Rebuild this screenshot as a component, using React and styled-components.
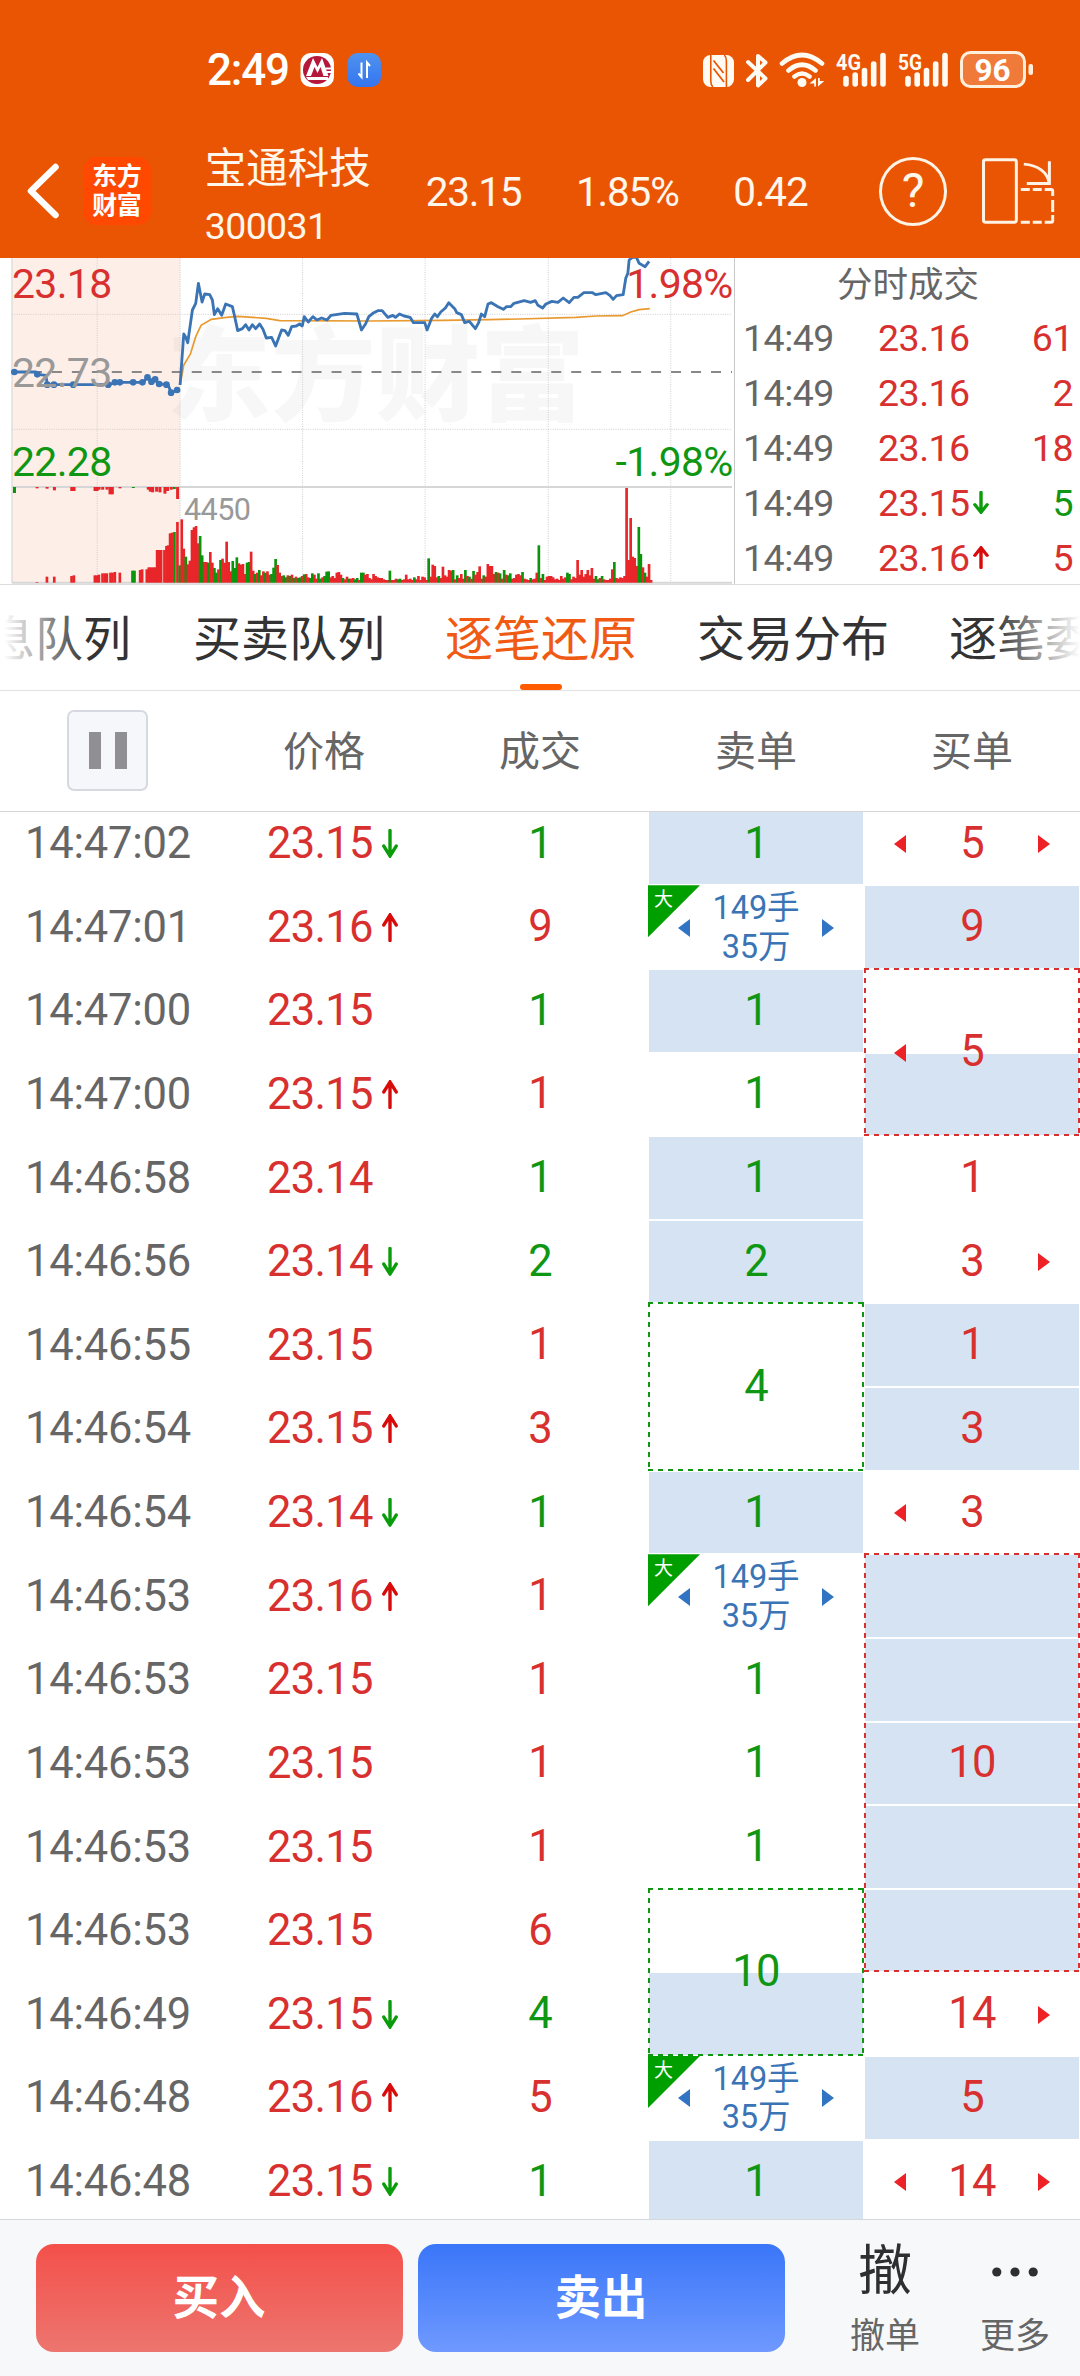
import React from "react";
import styled, { createGlobalStyle } from "styled-components";

const RED = "#d8302f";
const GREEN = "#0f9612";
const BLUE = "#3a74b5";

const GlobalStyle = createGlobalStyle`
  * {
    box-sizing: border-box;
  }
  body {
    margin: 0;
    background: #fff;
    font-family: Roboto, "Noto Sans CJK SC", sans-serif;
  }
`;

const Page = styled.div`
  width: 1080px;
  height: 2376px;
  display: flex;
  flex-direction: column;
  overflow: hidden;
  background: #fff;
`;

/* ---------- header ---------- */

const Header = styled.header`
  height: 258px;
  flex: none;
  background: #ea5504;
  color: #fff6ec;
`;

const StatusBar = styled.div`
  height: 124px;
  padding: 16px 46px 0 207px;
  display: flex;
  align-items: center;
`;

const Clock = styled.span`
  width: 93px;
  font-size: 44px;
  font-weight: 500;
  letter-spacing: -1.2px;
  line-height: 46px;
  color: #fff;
`;

const StatusIcons = styled.svg`
  display: block;
  margin-left: auto;
`;

const Badges = styled.svg`
  display: block;
`;

const TitleBar = styled.div`
  height: 134px;
  padding: 0 25px 0 27px;
  display: flex;
  align-items: center;
`;

const BackIcon = styled.svg`
  width: 33px;
  height: 56px;
  flex: none;
`;

const AppLogo = styled.div`
  width: 68px;
  height: 68px;
  margin-left: 23px;
  border-radius: 14px;
  background: #ff4800;
  color: #fff;
  display: flex;
  flex-direction: column;
  align-items: center;
  justify-content: center;
  font-size: 25px;
  font-weight: 700;
  line-height: 29px;
  letter-spacing: -0.5px;
`;

const StockName = styled.div`
  width: 222px;
  margin-left: 54px;
  padding-top: 10px;
  display: flex;
  flex-direction: column;
  font-size: 41.5px;
  line-height: 60px;
`;

const StockCode = styled.span`
  font-size: 37.5px;
  line-height: 55px;
  letter-spacing: -0.6px;
`;

const Quote = styled.span`
  width: ${(p) => p.$width}px;
  font-size: 40.5px;
  letter-spacing: -1.2px;
  line-height: 48px;
  padding-top: 2px;
  white-space: nowrap;
`;

const HelpButton = styled.div`
  width: 69px;
  height: 69px;
  margin-right: 34px;
  border: 3px solid #fff3e6;
  border-radius: 50%;
  display: flex;
  align-items: center;
  justify-content: center;
  font-size: 48px;
  line-height: 60px;
`;

/* ---------- chart + deals ---------- */

const Overview = styled.section`
  height: 327px;
  flex: none;
  display: flex;
  border-bottom: 1px solid #dcdcdc;
`;

const Chart = styled.svg`
  width: 735px;
  height: 326px;
  flex: none;
  display: block;
  border-right: 1px solid #c8c8c8;
`;

const Deals = styled.div`
  flex: 1;
  padding: 0 7px 0 8px;
`;

const DealsTitle = styled.div`
  padding-top: 2px;
  height: 53px;
  font-size: 35.5px;
  line-height: 50px;
  text-align: center;
  color: #666;
`;

const Deal = styled.div`
  height: 54.8px;
  display: flex;
  align-items: center;
  font-size: 37.5px;
  letter-spacing: -0.5px;
  color: ${RED};
`;

const DealTime = styled.span`
  width: 135px;
  color: #666;
`;

const DealPrice = styled.span`
  display: flex;
  align-items: center;
  gap: 3px;
`;

const DealVolume = styled.span`
  margin-left: auto;
  color: ${(p) => p.$color};
`;

/* ---------- tabs ---------- */

const Tabs = styled.nav`
  height: 106px;
  flex: none;
  padding-left: 1px;
  display: flex;
  gap: 60px;
  border-bottom: 1px solid #e2e2e2;
  overflow: hidden;
  position: relative;

  &::before,
  &::after {
    content: "";
    position: absolute;
    top: 0;
    bottom: 0;
    width: 86px;
  }
  &::before {
    left: 0;
    background: linear-gradient(to right, #fff 4px, rgba(255, 255, 255, 0));
  }
  &::after {
    right: 0;
    background: linear-gradient(to left, #fff, rgba(255, 255, 255, 0));
  }
`;

const Tab = styled.div`
  flex: none;
  width: ${(p) => (p.$cut ? "auto" : "192px")};
  margin-left: ${(p) => (p.$cut === "left" ? "-14px" : "0")};
  margin-right: ${(p) => (p.$cut === "left" ? "2px" : "0")};
  padding-top: 6px;
  display: flex;
  flex-direction: column;
  align-items: center;
  font-size: 48px;
  line-height: 98px;
  white-space: nowrap;
  color: ${(p) => (p.$active ? "#f05a12" : "#333")};

  &::after {
    content: "";
    width: 42px;
    height: 6px;
    margin-top: -5px;
    border-radius: 3px;
    background: ${(p) => (p.$active ? "#ff5b00" : "transparent")};
  }
`;

/* ---------- tick table ---------- */

const TableHead = styled.div`
  height: 121px;
  flex: none;
  display: grid;
  grid-template-columns: repeat(5, 216px);
  align-items: center;
  justify-items: center;
  border-bottom: 1px solid #d5d5d5;
  font-size: 41px;
  line-height: 60px;
  color: #666;
`;

const HeadLabel = styled.span`
  padding-top: 2px;
`;

const PauseButton = styled.div`
  width: 81px;
  height: 81px;
  margin: 0 1px 2px 0;
  border: 2px solid #d6dae0;
  border-radius: 7px;
  background: #f6f7fa;
  display: flex;
  align-items: center;
  justify-content: center;
  gap: 14px;
`;

const PauseBar = styled.span`
  width: 12px;
  height: 37px;
  background: #8f8f94;
`;

const TableBody = styled.div`
  height: 1407px;
  flex: none;
  overflow: hidden;
`;

const Ticks = styled.div`
  margin-top: -10.3px;
  display: grid;
  grid-template-columns: repeat(5, 216px);
  grid-auto-rows: 83.64px;
`;

const Cell = styled.div`
  grid-column: ${(p) => p.$col};
  grid-row: ${(p) => p.$row} / span ${(p) => p.$span || 1};
  display: flex;
  align-items: center;
  justify-content: center;
  font-size: 43.5px;
  letter-spacing: -0.7px;
  color: ${(p) => p.$color || "#666"};
`;

const TimeCell = styled(Cell)`
  letter-spacing: -0.2px;
`;

const PriceCell = styled(Cell)`
  justify-content: flex-start;
  padding-left: 51px;
  gap: 9px;
`;

const Shade = styled.div`
  grid-column: ${(p) => p.$col};
  grid-row: ${(p) => p.$row};
  margin: 1px;
  background: #d6e3f2;
`;

const dash = (dir, color) =>
  `repeating-linear-gradient(to ${dir}, ${color} 0 5px, transparent 5px 10px)`;

const OrderCell = styled(Cell)`
  justify-content: space-between;
  padding: 0 30px;
  ${(p) =>
    p.$span > 1 &&
    `
    margin: -1px 0 0;
    background-image: ${dash("right", p.$color)}, ${dash("right", p.$color)},
      ${dash("bottom", p.$color)}, ${dash("bottom", p.$color)};
    background-size: 100% 2px, 100% 2px, 2px 100%, 2px 100%;
    background-position: 0 0, 0 100%, 0 0, 100% 0;
    background-repeat: no-repeat;
  `}
`;

const OrderText = styled.span`
  padding-bottom: 1px;
`;

const BigText = styled.span`
  padding-top: 1px;
  font-size: 32.5px;
  line-height: 38.5px;
  letter-spacing: -0.1px;
  text-align: center;
`;

const Side = styled.svg`
  width: 12px;
  height: 18px;
  margin-top: 1px;
  visibility: ${(p) => (p.$on ? "visible" : "hidden")};
`;

const BigMark = styled.div`
  grid-column: ${(p) => p.$col};
  grid-row: ${(p) => p.$row};
  width: 52px;
  height: 52px;
  padding: 4px 0 0 6px;
  background: #009f00;
  clip-path: polygon(0 0, 100% 0, 0 100%);
  color: #fff;
  font-size: 19px;
  line-height: 22px;
`;

/* ---------- bottom bar ---------- */

const BottomBar = styled.footer`
  height: 157px;
  flex: none;
  padding: 24px 0 0 36px;
  display: flex;
  border-top: 1px solid #d3d8dc;
  background: #f6f8fa;
`;

const TradeButton = styled.button`
  width: 367px;
  height: 108px;
  margin: 0 15px 0 0;
  padding: 0 1px 9px 0;
  border: 0;
  border-radius: 18px;
  background: linear-gradient(${(p) => p.$from}, ${(p) => p.$to});
  color: #fff;
  font-family: inherit;
  font-size: 46.5px;
  font-weight: 700;
`;

const Action = styled.div`
  width: 130px;
  display: flex;
  flex-direction: column;
  align-items: center;
  font-size: 35px;
  line-height: 46px;
  color: #666;

  &:nth-child(3) {
    margin-left: 20px;
  }
`;

const ActionIcon = styled.span`
  height: 70px;
  display: flex;
  align-items: center;
  font-size: 54px;
  line-height: 56px;
  padding-bottom: 15px;
  color: #2f2f2f;
`;

/* ---------- data ---------- */

const deals = [
  { price: "23.16", volume: 61, color: RED },
  { price: "23.16", volume: 2, color: RED },
  { price: "23.16", volume: 18, color: RED },
  { price: "23.15", volume: 5, color: GREEN, dir: "down" },
  { price: "23.16", volume: 5, color: RED, dir: "up" },
];

const ticks = [
  ["14:47:02", "23.15", "down", 1, GREEN],
  ["14:47:01", "23.16", "up", 9, RED],
  ["14:47:00", "23.15", "", 1, GREEN],
  ["14:47:00", "23.15", "up", 1, RED],
  ["14:46:58", "23.14", "", 1, GREEN],
  ["14:46:56", "23.14", "down", 2, GREEN],
  ["14:46:55", "23.15", "", 1, RED],
  ["14:46:54", "23.15", "up", 3, RED],
  ["14:46:54", "23.14", "down", 1, GREEN],
  ["14:46:53", "23.16", "up", 1, RED],
  ["14:46:53", "23.15", "", 1, RED],
  ["14:46:53", "23.15", "", 1, RED],
  ["14:46:53", "23.15", "", 1, RED],
  ["14:46:53", "23.15", "", 6, RED],
  ["14:46:49", "23.15", "down", 4, GREEN],
  ["14:46:48", "23.16", "up", 5, RED],
  ["14:46:48", "23.15", "down", 1, GREEN],
];

// row is 1-based, span > 1 is one order filled by several ticks
const sellOrders = [
  { row: 1, text: 1 },
  { row: 2, big: true, left: true, right: true },
  { row: 3, text: 1 },
  { row: 4, text: 1 },
  { row: 5, text: 1 },
  { row: 6, text: 2 },
  { row: 7, text: 4, span: 2 },
  { row: 9, text: 1 },
  { row: 10, big: true, left: true, right: true },
  { row: 11, text: 1 },
  { row: 12, text: 1 },
  { row: 13, text: 1 },
  { row: 14, text: 10, span: 2 },
  { row: 16, big: true, left: true, right: true },
  { row: 17, text: 1 },
];
const sellShades = [1, 3, 5, 6, 9, 15, 17];

const buyOrders = [
  { row: 1, text: 5, left: true, right: true },
  { row: 2, text: 9 },
  { row: 3, text: 5, span: 2, left: true },
  { row: 5, text: 1 },
  { row: 6, text: 3, right: true },
  { row: 7, text: 1 },
  { row: 8, text: 3 },
  { row: 9, text: 3, left: true },
  { row: 10, text: 10, span: 5 },
  { row: 15, text: 14, right: true },
  { row: 16, text: 5 },
  { row: 17, text: 14, left: true, right: true },
];
const buyShades = [2, 4, 7, 8, 10, 11, 12, 13, 14, 16];

// chart units are thirds of a pixel
const preLine =
  "43,366 108,366 112,373 138,376 142,404 330,404 345,397 430,397 443,382 455,395 466,388 478,402 505,404 514,428 540,418";
const preDots = [
  [43, 366], [112, 373], [142, 404], [162, 404], [220, 404], [325, 404],
  [345, 397], [360, 397], [400, 397], [428, 397], [443, 382], [455, 395],
  [466, 388], [478, 402], [500, 404], [514, 428], [532, 420],
];
const priceLine =
  "541,405 552,252 558,262 564,278 578,180 588,160 596,100 607,156 615,132 630,134 638,150 644,194 654,176 666,196 678,162 698,170 705,200 714,242 728,236 738,224 748,240 758,224 768,236 780,222 790,238 800,264 816,262 828,288 846,240 856,242 866,256 876,230 890,228 900,222 908,228 914,200 926,216 940,200 952,210 966,204 982,210 994,196 1035,190 1072,192 1086,240 1098,222 1108,200 " +
  "1120,190 1135,182 1148,182 1165,202 1180,196 1188,202 1200,192 1214,198 1232,202 1242,218 1276,218 1283,240 1296,206 1306,192 1314,200 1324,186 1338,174 1348,158 1366,176 1372,188 1386,194 1396,218 1410,214 1428,236 1438,218 1446,192 1456,200 1466,162 1476,158 1496,170 1512,178 1522,170 1534,170 1544,160 1575,152 1594,157 1608,152 1616,166 1630,174 1640,162 1658,154 1676,157 1692,144 1710,158 1724,142 1736,142 1754,128 1780,128 1790,134 1820,128 1832,136 1842,148 1852,137 1872,134 1880,84 1886,70 1890,30 1900,22 1912,22 1920,40 1938,50 1950,34";
const averageLine =
  "541,405 552,345 572,312 588,260 604,226 635,208 680,202 715,199 800,205 840,212 1110,213 1330,211 1470,209 1560,207 1730,202 1790,198 1870,197 1895,186 1920,179 1952,176";

// one bar a minute, negative is a falling minute
const volumes = [
  190, 102, -78, 55, 66, 158, 166, 170, 118, -140, -82, 62, 62, -60, 92, 60,
  -44, -30, 40, -68, 72, 60, 123, 62, 34, -65, -44, -76, 58, 54, 56, 26, -60,
  -62, 93, 36, -26, 30, -38, 22, 34, -30, 34, 24, -26, -45, -71, 53, 30, 20,
  -22, -16, 22, -20, 24, -14, 18, -14, -16, 20, -25, 26, 16, -14, -28, 24, 12,
  -28, -12, 16, -20, -33, -34, 16, 20, 14, 30, 32, 24, -14, 10, 18, -12, 12,
  14, -10, -14, 8, -30, -30, 24, 26, 14, 10, 26, 20, 16, 14, 14, 10, 8, 8,
  -36, 8, 8, 12, -10, -12, 8, 10, 24, 10, 12, 8, -16, 10, 20, 8, 18, 16, 8,
  -73, 18, 54, 50, 16, -20, 14, 48, 22, 18, 38, 36, -38, 10, -22, 14, 26, 12,
  -38, 20, -18, 12, -35, 24, 32, 49, 12, -22, 18, 56, 50, 50, 26, -32, 30,
  -28, 12, -38, 24, -22, -28, 12, 14, 24, 26, 22, -32, 12, 10, 8, -14, 10, 12,
  30, -112, 14, -26, 8, 18, 20, 20, 16, 10, 12, 8, 20, 12, 16, -30, -26, 10,
  18, 14, 68, 24, 38, 18, 26, 38, 22, 44, 12, -20, -10, 14, -20, 10, 8, 8, 12,
  40, -62, 14, 12, 16, 14, 20, 284, 68, 194, 78, 74, 50, -167, -86, 46, -30,
  18, 56, 8,
];

const preVolumes = [
  [111, 2], [141, 18], [163, 18], [215, 20], [222, 22], [285, 22], [291, 22],
  [297, 24], [308, 28], [315, 28], [321, 28], [332, 30], [338, 30], [345, 32],
  [360, 30], [398, -36], [404, -36], [421, 38], [427, 40], [441, 40],
  [447, 46], [453, 46], [460, 46], [466, 46], [472, 98], [478, 98],
  [484, 98], [494, 98], [500, 110], [505, 112], [511, 148], [517, 150],
  [524, -152], [533, 182], [540, -52],
];

// unmatched volume hangs from the top of the volume pane
const unmatched = [
  [43, -18], [111, 4], [141, 5], [163, 10], [215, 12], [222, 12], [285, 12],
  [291, 12], [297, 8], [308, 8], [321, 8], [330, 22], [337, 22], [360, 4],
  [400, -3], [445, 8], [451, 14], [458, 16], [470, 14], [480, 16], [495, 20],
  [503, 12], [514, 8], [523, -6], [533, 36],
];

const barColor = (v) => (v < 0 ? "#0c930c" : "#e8262a");

/* ---------- parts ---------- */

const PriceArrow = ({ dir, small }) => (
  <svg
    width="16"
    height={small ? 23 : 29}
    viewBox="0 0 16 28"
    preserveAspectRatio="none"
    transform={dir === "down" ? "rotate(180)" : undefined}
    fill="none"
    stroke={dir === "down" ? "#0a9c0a" : "#d80a0a"}
    strokeWidth="3.4"
    strokeLinecap="round"
  >
    <path d="M8 26.5V2M1.8 11.5 8 2l6.2 9.5" />
  </svg>
);

const Triangle = ({ on, side, color }) => (
  <Side $on={on} viewBox="0 0 12 18" fill={color}>
    <path d={side === "left" ? "M12 0v18L0 9z" : "M0 0v18l12-9z"} />
  </Side>
);

const Orders = ({ col, color, orders, shades }) => (
  <>
    {shades.map((row) => (
      <Shade key={row} $col={col} $row={row} />
    ))}
    {orders.map((o) => {
      const ink = o.big ? BLUE : color;
      const side = o.big ? "#3274c4" : "#ec2227";
      return (
        <React.Fragment key={o.row}>
          {o.big && (
            <BigMark $col={col} $row={o.row}>
              大
            </BigMark>
          )}
          <OrderCell $col={col} $row={o.row} $span={o.span} $color={ink}>
            <Triangle on={o.left} side="left" color={side} />
            {o.big ? (
              <BigText>
                149手
                <br />
                35万
              </BigText>
            ) : (
              <OrderText>{o.text}</OrderText>
            )}
            <Triangle on={o.right} side="right" color={side} />
          </OrderCell>
        </React.Fragment>
      );
    })}
  </>
);

const SignalBars = ({ x }) => (
  <path
    d={`M${x} 77.5v5.5M${x + 9.2} 74v9M${x + 18.5} 69.5V83M${x + 27.7} 63v20M${x + 37} 54.5V83`}
    stroke="#fffaf2"
    strokeWidth="5.6"
    strokeLinecap="round"
  />
);

const StatusRight = () => (
  <StatusIcons width="332" height="40" viewBox="702 49 332 40">
    {/* nfc */}
    <rect x="703" y="54" width="31" height="32" rx="7.5" fill="#fffaf2" />
    <g stroke="#ea5504" fill="none">
      <path d="M710.8 54v26q0 4 2 6M726.4 86V60q0-4-2-6" strokeWidth="1.6" />
      <path d="M713.5 67.5L724 81M713.5 59.5l10 12.5" strokeWidth="1.8" />
    </g>
    {/* bluetooth */}
    <path
      d="M748 61l17.5 16.5-7.5 7V55l7.5 6.5L748 79"
      fill="none"
      stroke="#fffaf2"
      strokeWidth="4"
      strokeLinecap="round"
      strokeLinejoin="round"
    />
    {/* wifi */}
    <g fill="none" stroke="#fffaf2" strokeWidth="4.6" strokeLinecap="round">
      <path d="M782 62.5q20-17 40 0M788.5 69.5q13.5-11.5 27 0M794.5 75.5q7.5-6 15 0" />
    </g>
    <circle cx="802" cy="81.5" r="4.5" fill="#fffaf2" />
    <path d="M816 77v8.5h-1.8v-3H809.5zM818 85.5V77h1.8v3h4.5z" fill="#fffaf2" />
    {/* signals */}
    <g fill="#fffaf2" fontSize="21.5" fontWeight="700">
      <text x="836" y="69" textLength="25" lengthAdjust="spacingAndGlyphs">4G</text>
      <text x="898" y="69" textLength="24" lengthAdjust="spacingAndGlyphs">5G</text>
    </g>
    <SignalBars x={846} />
    <SignalBars x={908} />
    {/* battery */}
    <rect x="961.5" y="51.5" width="63" height="34" rx="9" fill="#f07a3a" stroke="#ffeeda" strokeWidth="3" />
    <rect x="1028.5" y="63" width="4.5" height="11" rx="2" fill="#ffeeda" />
    <text x="992.5" y="80" textAnchor="middle" fontSize="31.5" fontWeight="700" fill="#fff">96</text>
  </StatusIcons>
);

const StatusBadges = () => (
  <Badges width="82" height="34" viewBox="0 0 82 34">
    <defs>
      <linearGradient id="blueBadge" x1="0" y1="0" x2="0" y2="1">
        <stop offset="0" stopColor="#4f93ee" />
        <stop offset="1" stopColor="#3474f0" />
      </linearGradient>
    </defs>
    <rect x="0.5" width="33.5" height="34" rx="10" fill="#fff" />
    <circle cx="17" cy="17" r="14" fill="#b5173a" />
    <path d="M6 23l7-18 4.5 9 4.5-9 6.5 18h-5l-3-9-3 6-3-6-3.5 9z" fill="#fff" />
    <path d="M6 24h22v3H8z" fill="#fff" />
    <path d="M25.5 15.5h6M26.5 19h5" stroke="#fff" strokeWidth="1.8" />
    <rect x="47.5" width="33.5" height="34" rx="10" fill="url(#blueBadge)" />
    <path d="M61.5 9.5V24l-3-3.5M67 25V9.5l3 3.5" fill="none" stroke="#fff" strokeWidth="2" />
  </Badges>
);

const RotateIcon = () => (
  <svg width="74" height="68" viewBox="981 156 74 68" fill="none" stroke="#fff3e6" strokeWidth="3">
    <rect x="983.5" y="158.5" width="33" height="63" rx="2" />
    <path d="M1024 163c14 1 24 8 25.5 19.5M1049.7 160v22.5H1027" />
    <path d="M1021 188.5h9M1033 188.5h9M1045 188.5h6.5q1.5 0 1.5 1.5v5M1053 199v12M1053 214v6q0 1.5-1.5 1.5H1045M1021 221.5h9M1033 221.5h9" />
  </svg>
);

const MinuteChart = () => (
  <Chart viewBox="0 24 2205 978" preserveAspectRatio="none">
    <rect x="36" y="24" width="505" height="975" fill="#fdeee7" />
    <text
      x="500"
      y="490"
      textLength="1256"
      lengthAdjust="spacingAndGlyphs"
      fontSize="310"
      fontWeight="900"
      fill="#000"
      fillOpacity="0.03"
    >
      东方财富
    </text>
    <g stroke="#cfcfcf" strokeWidth="3" strokeDasharray="3 4" fill="none">
      <path d="M292 24V998M541 24V998M909 24V998M1277 24V998M1647 24V998M2015 24V998" />
      <path d="M36 193H2199M36 538H2199" />
    </g>
    <path d="M36 24V998" stroke="#dcdcdc" strokeWidth="4" />
    <path d="M36 711H2199M36 998H2199" stroke="#d6d6d6" strokeWidth="6" />
    <path d="M36 366H2199" stroke="#888" strokeWidth="6" strokeDasharray="30 30" />

    {unmatched.map(([x, v]) => (
      <rect key={x} x={x - 4} y="711" width="9" height={Math.abs(v)} fill={barColor(v)} />
    ))}
    {preVolumes.map(([x, v]) => (
      <rect key={x} x={x - 4} y={998 - Math.abs(v)} width="8" height={Math.abs(v)} fill={barColor(v)} />
    ))}
    {volumes.map((v, i) => (
      <rect
        key={i}
        x={542 + i * 6.13}
        y={998 - Math.abs(v)}
        width="8"
        height={Math.abs(v)}
        fill={barColor(v)}
      />
    ))}

    <polyline points={averageLine} fill="none" stroke="#e8992f" strokeWidth="5" />
    <g fill="none" stroke={BLUE} strokeWidth="8.5" strokeLinejoin="round">
      <polyline points={preLine} />
      <polyline points={priceLine} />
    </g>
    {preDots.map(([x, y]) => (
      <circle key={x} cx={x} cy={y} r="10" fill={BLUE} />
    ))}

    <g fontSize="123" letterSpacing="-2">
      <text x="36" y="144" fill={RED}>23.18</text>
      <text x="36" y="411" fill="#999">22.73</text>
      <text x="36" y="678" fill={GREEN}>22.28</text>
      <text x="2201" y="144" fill={RED} textAnchor="end">1.98%</text>
      <text x="2201" y="678" fill={GREEN} textAnchor="end">-1.98%</text>
      <text x="553" y="809" fill="#999" fontSize="92">4450</text>
    </g>
  </Chart>
);

export default function App() {
  return (
    <Page>
      <GlobalStyle />
      <Header>
        <StatusBar>
          <Clock>2:49</Clock>
          <StatusBadges />
          <StatusRight />
        </StatusBar>
        <TitleBar>
          <BackIcon viewBox="0 0 33 56" fill="none" stroke="#fff" strokeWidth="6.5" strokeLinecap="round" strokeLinejoin="round">
            <path d="M28.5 4L4 28l24.5 24" />
          </BackIcon>
          <AppLogo>
            <span>东方</span>
            <span>财富</span>
          </AppLogo>
          <StockName>
            宝通科技
            <StockCode>300031</StockCode>
          </StockName>
          <Quote $width={151}>23.15</Quote>
          <Quote $width={158}>1.85%</Quote>
          <Quote $width={146}>0.42</Quote>
          <HelpButton>?</HelpButton>
          <RotateIcon />
        </TitleBar>
      </Header>

      <Overview>
        <MinuteChart />
        <Deals>
          <DealsTitle>分时成交</DealsTitle>
          {deals.map((d, i) => (
            <Deal key={i}>
              <DealTime>14:49</DealTime>
              <DealPrice>
                {d.price}
                {d.dir && <PriceArrow dir={d.dir} small />}
              </DealPrice>
              <DealVolume $color={d.color}>{d.volume}</DealVolume>
            </Deal>
          ))}
        </Deals>
      </Overview>

      <Tabs>
        <Tab $cut="left">息队列</Tab>
        <Tab>买卖队列</Tab>
        <Tab $active>逐笔还原</Tab>
        <Tab>交易分布</Tab>
        <Tab $cut="right">逐笔委</Tab>
      </Tabs>

      <TableHead>
        <PauseButton>
          <PauseBar />
          <PauseBar />
        </PauseButton>
        <HeadLabel>价格</HeadLabel>
        <HeadLabel>成交</HeadLabel>
        <HeadLabel>卖单</HeadLabel>
        <HeadLabel>买单</HeadLabel>
      </TableHead>

      <TableBody>
        <Ticks>
          {ticks.map(([time, price, dir, volume, color], i) => (
            <React.Fragment key={i}>
              <TimeCell $col={1} $row={i + 1}>{time}</TimeCell>
              <PriceCell $col={2} $row={i + 1} $color={RED}>
                {price}
                {dir && <PriceArrow dir={dir} />}
              </PriceCell>
              <Cell $col={3} $row={i + 1} $color={color}>
                <OrderText>{volume}</OrderText>
              </Cell>
            </React.Fragment>
          ))}
          <Orders col={4} color={GREEN} orders={sellOrders} shades={sellShades} />
          <Orders col={5} color={RED} orders={buyOrders} shades={buyShades} />
        </Ticks>
      </TableBody>

      <BottomBar>
        <TradeButton $from="#f4504a" $to="#ed756f">买入</TradeButton>
        <TradeButton $from="#3a76f9" $to="#6f99ff">卖出</TradeButton>
        <Action>
          <ActionIcon>撤</ActionIcon>
          撤单
        </Action>
        <Action>
          <ActionIcon>
            <svg width="46" height="10" viewBox="0 0 46 10" fill="#2f2f2f">
              <circle cx="4.8" cy="5" r="4.6" />
              <circle cx="23" cy="5" r="4.6" />
              <circle cx="41.2" cy="5" r="4.6" />
            </svg>
          </ActionIcon>
          更多
        </Action>
      </BottomBar>
    </Page>
  );
}
